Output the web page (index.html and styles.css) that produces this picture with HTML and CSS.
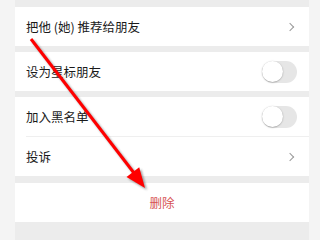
FILE: index.html
```html
<!DOCTYPE html>
<html lang="zh">
<head>
<meta charset="utf-8">
<link rel="stylesheet" href="styles.css">
</head>
<body>
<div class="panel">
  <div class="group">
    <div class="row"><span class="label">把他 (她) 推荐给朋友</span><span class="chev"></span></div>
  </div>
  <div class="group">
    <div class="row"><span class="label">设为星标朋友</span><span class="toggle"><span class="knob"></span></span></div>
  </div>
  <div class="group">
    <div class="row"><span class="label">加入黑名单</span><span class="toggle"><span class="knob"></span></span></div>
    <div class="divider"></div>
    <div class="row"><span class="label">投诉</span><span class="chev"></span></div>
  </div>
  <div class="group gap-lg">
    <div class="row center"><span class="danger">删除</span></div>
  </div>
</div>
<svg class="arrow" width="320" height="240" viewBox="0 0 320 240">
  <defs>
    <filter id="sh" x="-20%" y="-20%" width="140%" height="140%">
      <feGaussianBlur stdDeviation="1.3"/>
    </filter>
  </defs>
  <g opacity="0.45" filter="url(#sh)" transform="translate(2,2)">
    <line x1="31" y1="39" x2="134" y2="173" stroke="#333" stroke-width="3"/>
    <polygon points="145,188 126.5,177 139.2,167.2" fill="#333"/>
  </g>
  <line x1="31" y1="39" x2="134" y2="173" stroke="#ff0000" stroke-width="3"/>
  <polygon points="145,188 126.5,177 139.2,167.2" fill="#ff0000"/>
</svg>
</body>
</html>
```
FILE: styles.css
```css
html, body {
  margin: 0;
  padding: 0;
}
body {
  width: 320px;
  height: 240px;
  background: #f4f4f4;
  overflow: hidden;
  position: relative;
  font-family: "Noto Sans CJK SC", "Noto Sans", sans-serif;
}
.panel {
  margin-left: 15px;
  width: 294px;
  height: 240px;
  background: #ececec;
  padding-top: 7px;
  box-sizing: border-box;
  display: flex;
  flex-direction: column;
  gap: 6px;
}
.group {
  background: #ffffff;
}
.gap-lg {
  margin-top: 1px;
}
.row {
  height: 39px;
  display: flex;
  align-items: center;
  justify-content: space-between;
  padding: 0 12px 0 11px;
  box-sizing: border-box;
}
.row.center {
  justify-content: center;
  padding: 0;
}
.label {
  font-size: 12.5px;
  color: #1a1a1a;
}
.danger {
  font-size: 12.5px;
  color: #d65252;
}
.divider {
  height: 1px;
  margin-left: 11px;
  background: #efefef;
}
.chev {
  width: 5px;
  height: 5px;
  border-top: 1px solid #9a9a9a;
  border-right: 1px solid #9a9a9a;
  transform: rotate(45deg);
  margin-right: 4px;
}
.toggle {
  width: 35px;
  height: 22px;
  border-radius: 11px;
  background: #e6e6e6;
  position: relative;
}
.knob {
  position: absolute;
  left: 0;
  top: 0;
  width: 21px;
  height: 21px;
  border-radius: 50%;
  background: #fff;
  box-shadow: 0 0.5px 1.5px rgba(0,0,0,0.35);
}
.arrow {
  position: absolute;
  left: 0;
  top: 0;
}
```
